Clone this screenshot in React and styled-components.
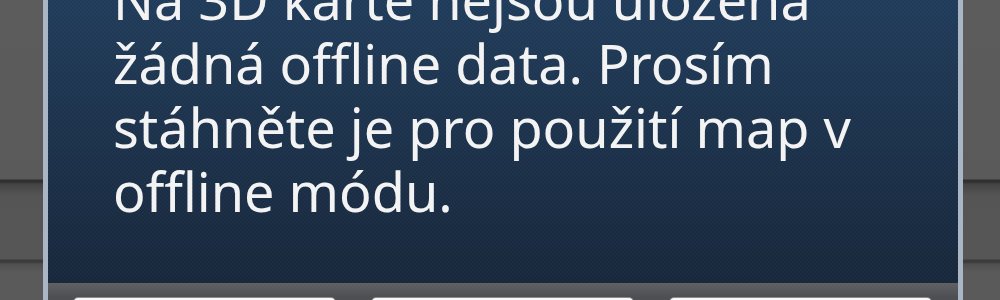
import React from "react";
import styled, { createGlobalStyle } from "styled-components";

const GlobalStyle = createGlobalStyle`
  html, body {
    margin: 0;
    padding: 0;
    height: 300px;
    overflow: hidden;
    background: #585858;
  }
  #root {
    height: 300px;
  }
`;

const Screen = styled.div`
  height: 300px;
  overflow: hidden;
  display: flex;
  align-items: flex-start;
  padding-left: 43px;
  background: linear-gradient(
    to bottom,
    #5c5c5c 0px,
    #5a5a5a 179px,
    #2f2f2f 180px,
    #303030 182px,
    #444444 184px,
    #555555 196px,
    #565656 259px,
    #3b3b3b 260px,
    #3b3b3b 262px,
    #4f4f4f 264px,
    #5a5a5a 272px,
    #5a5a5a 300px
  );
`;

const Dialog = styled.div`
  width: 910px;
  flex-shrink: 0;
  border-left: 5px solid #aab6c5;
  border-right: 5px solid #aab6c5;
  display: flex;
  flex-direction: column;
`;

const Body = styled.div`
  margin-top: -33px;
  padding: 0 30px 60px 65px;
  background:
    repeating-conic-gradient(rgba(255, 255, 255, 0.018) 0 25%, transparent 0 50%) 0 0 / 4px 4px,
    linear-gradient(to bottom, #213e5e 0px, #1d334d 150px, #17273b 316px);
`;

const Message = styled.p`
  margin: 0;
  font-family: "Noto Sans", "Open Sans", "DejaVu Sans", sans-serif;
  font-size: 54px;
  line-height: 64px;
  color: #f3f3f3;
  letter-spacing: 0;
`;

const ButtonBar = styled.div`
  display: flex;
  gap: 35px;
  padding: 14px 26px 0 25px;
  height: 40px;
  background: linear-gradient(to bottom, #5f6164 0px, #55575a 8px, #4d4f52 14px);
`;

const Button = styled.button`
  flex: 1;
  height: 40px;
  border: 1px solid #8a8c8f;
  border-radius: 5px;
  background: linear-gradient(to bottom, #f4f4f4, #ffffff 3px, #f7f7f7);
  font-family: "Noto Sans", sans-serif;
  font-size: 20px;
  color: #111;
`;

export default function App() {
  return (
    <>
      <GlobalStyle />
      <Screen>
        <Dialog>
          <Body>
            <Message>
              Na 3D kartě nejsou uložena
              <br />
              žádná offline data. Prosím
              <br />
              stáhněte je pro použití map v
              <br />
              offline módu.
            </Message>
          </Body>
          <ButtonBar>
            <Button />
            <Button />
            <Button />
          </ButtonBar>
        </Dialog>
      </Screen>
    </>
  );
}
